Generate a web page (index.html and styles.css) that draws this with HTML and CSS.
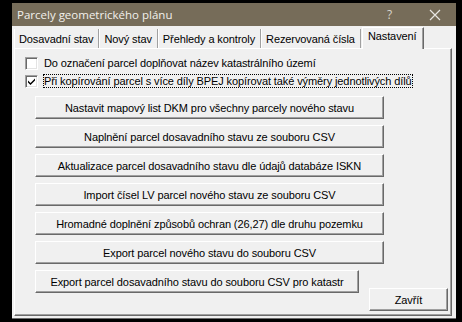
FILE: index.html
```html
<!DOCTYPE html>
<html>
<head>
<meta charset="utf-8">
<link rel="stylesheet" href="styles.css">
</head>
<body>
<div class="window">
  <div class="titlebar">
    <span class="title">Parcely geometrického plánu</span>
    <span class="help">?</span>
    <span class="close"><svg width="12" height="12" viewBox="0 0 12 12"><path d="M1 1 L11 11 M11 1 L1 11" stroke="#e8e6e2" stroke-width="1.2" fill="none"/></svg></span>
  </div>
  <div class="client">
    <div class="tabs">
      <div class="tab">Dosavadní stav</div>
      <div class="tab">Nový stav</div>
      <div class="tab">Přehledy a kontroly</div>
      <div class="tab">Rezervovaná čísla</div>
      <div class="tab active">Nastavení</div>
    </div>
    <div class="panel">
      <div class="check"><span class="box"></span><span class="label">Do označení parcel doplňovat název katastrálního území</span></div>
      <div class="check"><span class="box"><svg width="9" height="9" viewBox="0 0 9 9"><path d="M1 3.5 L3.5 6 L8 1.5 L8 3.5 L3.5 8 L1 5.5 Z" fill="#000"/></svg></span><span class="label focus">Při kopírování parcel s více díly BPEJ kopírovat také výměry jednotlivých dílů</span></div>
      <div class="buttons">
        <div class="btn wide">Nastavit mapový list DKM pro všechny parcely nového stavu</div>
        <div class="btn wide">Naplnění parcel dosavadního stavu ze souboru CSV</div>
        <div class="btn wide">Aktualizace parcel dosavadního stavu dle údajů databáze ISKN</div>
        <div class="btn wide">Import čísel LV parcel nového stavu ze souboru CSV</div>
        <div class="btn wide">Hromadné doplnění způsobů ochran (26,27) dle druhu pozemku</div>
        <div class="btn wide">Export parcel nového stavu do souboru CSV</div>
        <div class="lastrow">
          <div class="btn mid">Export parcel dosavadního stavu do souboru CSV pro katastr</div>
          <div class="btn closebtn">Zavřít</div>
        </div>
      </div>
    </div>
  </div>
</div>
</body>
</html>
```
FILE: styles.css
```css
html, body {
  margin: 0;
  padding: 0;
  background: #000;
}
body {
  padding: 3px 0 0 12px;
  font-family: "Liberation Sans", Arial, sans-serif;
  font-size: 11px;
  letter-spacing: -0.1px;
  color: #000;
}
.window {
  width: 444px;
  height: 316px;
  background: #f0f0f0;
  display: flex;
  flex-direction: column;
  box-sizing: border-box;
  border-bottom: 1px solid #6a6a6a;
}
.titlebar {
  height: 23px;
  flex: none;
  background: #766c59;
  color: #f2f0ec;
  display: flex;
  align-items: center;
  font-family: "Open Sans", "Noto Sans", sans-serif;
  font-size: 11.5px;
  letter-spacing: 0;
}
.title {
  margin-left: 5px;
  flex: 1;
}
.help {
  width: 12px;
  margin-right: 30px;
  font-size: 12px;
  color: #d8d4cc;
}
.close {
  display: flex;
  margin-right: 15px;
}
.client {
  flex: 1;
  display: flex;
  flex-direction: column;
  padding: 1px 4px 2px 2px;
}
.tabs {
  display: flex;
  height: 21px;
  align-items: flex-end;
  flex: none;
}
.tab {
  height: 19px;
  line-height: 20px;
  padding: 0 5px 0 5px;
  border-right: 1px solid #a0a0a0;
  box-shadow: inset 1px 0 0 #fff;
  white-space: nowrap;
}
.tab.active {
  height: 21px;
  line-height: 17px;
  background: #f0f0f0;
  border-top: 1px solid #fff;
  border-left: 1px solid #fff;
  border-right: 1px solid #696969;
  box-shadow: inset -1px 0 0 #a0a0a0;
  margin-bottom: -1px;
  margin-left: 1px;
  padding: 0 6px 0 5px;
  position: relative;
  z-index: 1;
}
.panel {
  flex: 1;
  border-top: 1px solid #fff;
  border-left: 1px solid #fff;
  border-right: 1px solid #696969;
  border-bottom: 1px solid #696969;
  box-shadow: inset -1px -1px 0 #a0a0a0;
  padding: 5px 3px 3px 10px;
  display: flex;
  flex-direction: column;
}
.check {
  display: flex;
  align-items: center;
  height: 18px;
}
.box {
  width: 13px;
  height: 13px;
  box-sizing: border-box;
  background: #fff;
  border-top: 1px solid #a0a0a0;
  border-left: 1px solid #a0a0a0;
  border-right: 1px solid #fff;
  border-bottom: 1px solid #fff;
  box-shadow: inset 1px 1px 0 #696969, inset -1px -1px 0 #e3e3e3;
  display: flex;
  align-items: center;
  justify-content: center;
  margin-right: 5px;
}
.label {
  white-space: nowrap;
  padding: 1px 1px;
}
.focus {
  outline: 1px dotted #000;
  outline-offset: -1px;
}
.buttons {
  display: flex;
  flex-direction: column;
  gap: 6px;
  margin-top: 6px;
  padding-left: 10px;
}
.btn {
  height: 23px;
  box-sizing: border-box;
  background: #f0f0f0;
  border-top: 1px solid #fff;
  border-left: 1px solid #fff;
  border-right: 1px solid #696969;
  border-bottom: 1px solid #696969;
  box-shadow: inset -1px -1px 0 #a0a0a0;
  display: flex;
  align-items: center;
  justify-content: center;
  white-space: nowrap;
}
.wide {
  width: 349px;
}
.lastrow {
  display: flex;
  align-items: flex-start;
}
.mid {
  width: 324px;
}
.closebtn {
  width: 79px;
  margin-left: auto;
  margin-top: 18px;
}
```
